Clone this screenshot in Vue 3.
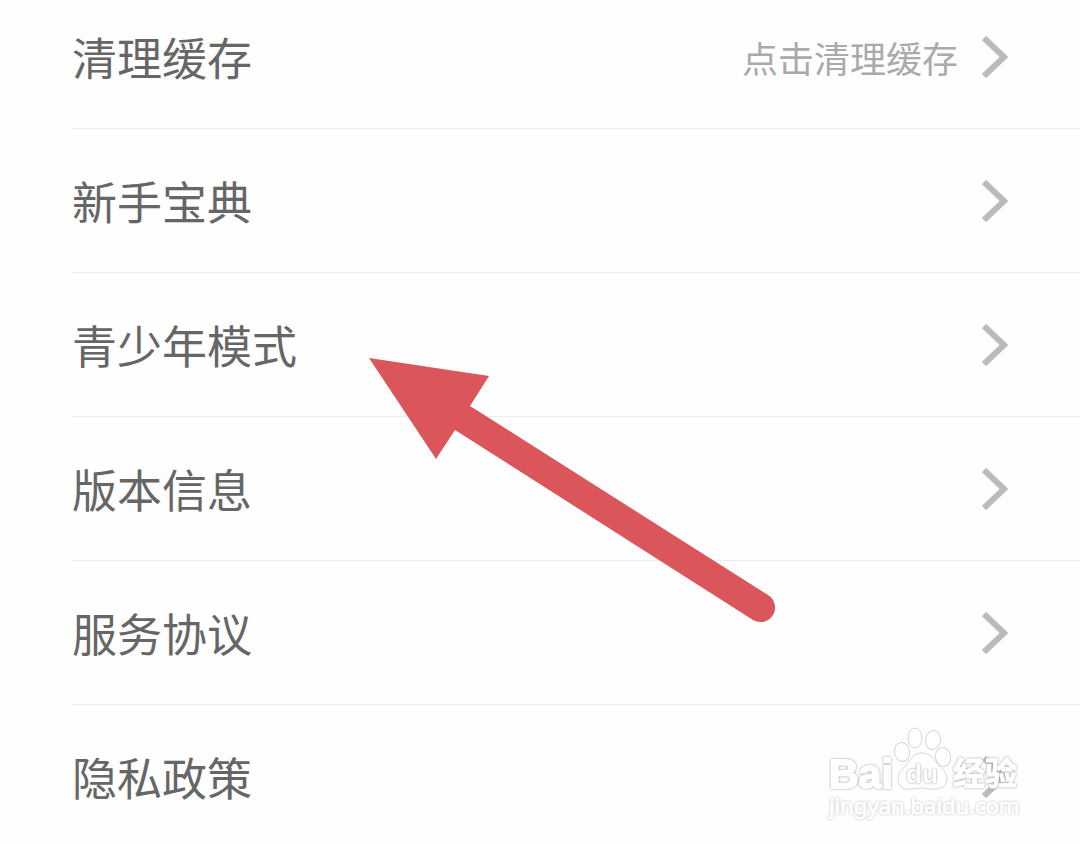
<script setup>
const items = [
  { label: '清理缓存', hint: '点击清理缓存' },
  { label: '新手宝典' },
  { label: '青少年模式' },
  { label: '版本信息' },
  { label: '服务协议' },
  { label: '隐私政策' },
]
</script>

<template>
  <main class="page">
    <nav class="list">
      <a v-for="item in items" :key="item.label" class="row" href="#">
        <span class="label">{{ item.label }}</span>
        <span v-if="item.hint" class="hint">{{ item.hint }}</span>
        <svg class="chevron" viewBox="0 0 28 44" aria-hidden="true">
          <path d="M3 3 L23 22 L3 41" />
        </svg>
      </a>
    </nav>

    <svg class="pointer" viewBox="0 0 410 270" aria-hidden="true">
      <path d="M1 1 L121 19 L102 49 L400 238 A14 14 0 0 1 385 263 L87 73 L68 102 Z" />
    </svg>

    <svg class="watermark" viewBox="0 0 230 120" role="img" aria-label="Baidu 经验">
      <text class="brand" x="19" y="73" font-size="41">Bai</text>
      <g class="paw">
        <ellipse cx="92" cy="37" rx="7.500" ry="9.500" transform="rotate(-8 92 37)" />
        <ellipse cx="105" cy="23" rx="7" ry="10" />
        <ellipse cx="123" cy="25" rx="7.500" ry="9.500" transform="rotate(8 123 25)" />
        <ellipse cx="133" cy="42" rx="7.500" ry="9.500" transform="rotate(-8 133 42)" />
        <path d="M112 38 C104 38 101 44 97 49 C93 54 88 57 88 64 C88 71 93 75 99 74 C105 74 108 73 112 73 C117 73 120 75 126 74 C133 74 137 69 137 63 C136 56 131 53 127 48 C123 43 120 38 112 38 Z" />
      </g>
      <text class="brand initials" x="96" y="68" font-size="26">du</text>
      <text class="brand chinese" x="143" y="70" font-size="32">经验</text>
      <text class="site" x="19" y="99" font-size="22">jingyan.baidu.com</text>
    </svg>
  </main>
</template>

<style>
body {
  background: #fefefe;
  overflow-x: hidden;
}
</style>

<style scoped>
.page {
  position: relative;
  overflow: hidden;
  font-family: "Noto Sans CJK SC", sans-serif;
}

.list {
  margin-top: -15px;
  padding-left: 72px;
}

.row {
  display: flex;
  align-items: center;
  box-sizing: border-box;
  height: 144px;
  padding-right: 71px;
  border-bottom: 1px solid #ececec;
  color: #666;
  text-decoration: none;
}

.row:last-child {
  border-bottom-color: transparent;
}

.label {
  flex: 1;
  font-size: 45px;
  line-height: 64px;
}

.hint {
  margin-right: 23px;
  color: #aaa;
  font-size: 36px;
  line-height: 52px;
}

.chevron {
  width: 28px;
  height: 44px;
  fill: none;
  stroke: #bbb;
  stroke-width: 6;
}

.pointer {
  position: absolute;
  top: 357px;
  left: 368px;
  width: 410px;
  height: 270px;
  fill: #db565b;
  pointer-events: none;
}

.watermark {
  position: absolute;
  top: 715px;
  right: 40px;
  width: 230px;
  height: 120px;
  fill: #fff;
  pointer-events: none;
}

.paw {
  stroke: #d6d6d6;
  stroke-width: 1;
}

.brand {
  font-family: "Liberation Sans", sans-serif;
  font-weight: 700;
  stroke: #fff;
  stroke-width: 2;
  filter: drop-shadow(0 0 1px #999);
}

.initials {
  stroke: none;
}

.chinese {
  font-family: "Noto Sans CJK SC", sans-serif;
  stroke-width: 1;
}

.site {
  font-family: "Noto Sans", sans-serif;
  stroke: #fff;
  stroke-width: 1;
  filter: drop-shadow(0 0 1px #bbb);
}
</style>
